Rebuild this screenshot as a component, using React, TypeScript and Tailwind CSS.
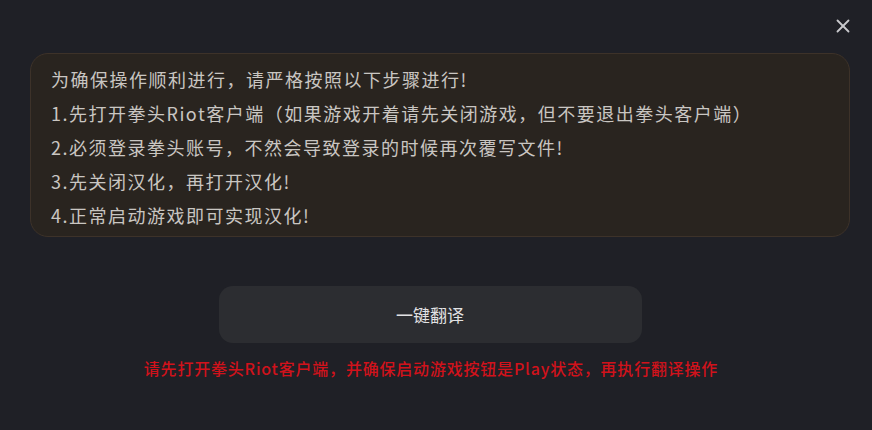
import { X } from 'lucide-react'

const STEPS = [
  '为确保操作顺利进行，请严格按照以下步骤进行!',
  '1.先打开拳头Riot客户端（如果游戏开着请先关闭游戏，但不要退出拳头客户端）',
  '2.必须登录拳头账号，不然会导致登录的时候再次覆写文件!',
  '3.先关闭汉化，再打开汉化!',
  '4.正常启动游戏即可实现汉化!',
]

export default function App() {
  return (
    <div className="w-[872px] h-[430px] bg-[#1f2026] flex flex-col font-['Noto_Sans_CJK_SC',sans-serif] overflow-hidden">
      <div className="flex justify-end pt-[15px] pr-[18px] h-[53px]">
        <X size={22} strokeWidth={2} className="text-[#c8c8cc]" />
      </div>

      <div className="mx-[30px] w-[820px] h-[184px] rounded-[18px] border border-[#3d3229] bg-[#29241f] px-[20px] pt-[8px] flex flex-col">
        {STEPS.map(s => (
          <p key={s} className="text-[18px] leading-[34px] tracking-[1.5px] text-[#c9c6c2]">{s}</p>
        ))}
      </div>

      <div className="flex justify-center mt-[49px] pr-[12px]">
        <button className="w-[423px] h-[57px] rounded-[14px] bg-[#2c2d31] text-[17px] text-[#e2e2e4]">
          一键翻译
        </button>
      </div>

      <p className="mt-[14px] pr-[10px] text-center text-[16px] leading-[22px] text-[#d1121b] font-medium tracking-[0.8px]">
        请先打开拳头Riot客户端，并确保启动游戏按钮是Play状态，再执行翻译操作
      </p>
    </div>
  )
}
